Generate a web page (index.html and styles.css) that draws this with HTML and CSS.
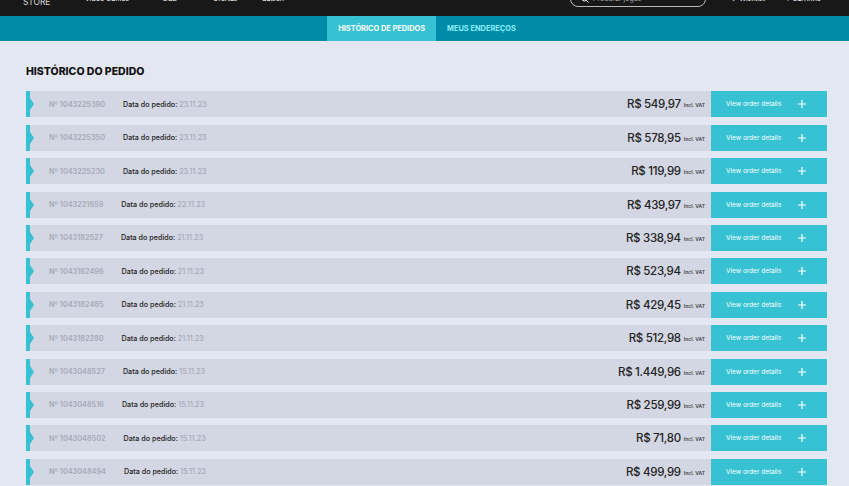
FILE: index.html
```html
<!DOCTYPE html>
<html lang="pt-BR">
<head>
<meta charset="utf-8">
<title>Histórico do pedido</title>
<link rel="stylesheet" href="styles.css">
</head>
<body>
<header class="topbar">
  <div class="brand">STORE</div>
  <nav class="mainnav"><a>Vídeo Games</a><a>D&amp;D</a><a>Ofertas</a><a>Salsch</a></nav>
  <div class="search"><svg width="8" height="8" viewBox="0 0 8 8"><circle cx="3.5" cy="3.5" r="2.5" fill="none" stroke="#fff"/><path d="M5.4 5.4 7.5 7.5" stroke="#fff"/></svg><span>Procurar jogos</span></div>
  <div class="useractions"><a>♥ Wishlist</a><a>▾ Carrinho</a></div>
</header>
<nav class="subnav"><a class="tab active">HISTÓRICO DE PEDIDOS</a><a class="tab">MEUS ENDEREÇOS</a></nav>
<main class="content">
  <h1 class="title">HISTÓRICO DO PEDIDO</h1>
  <div class="orders">
    <div class="order"><span class="flag"></span><span class="num">Nº 1043225390</span><span class="date">Data do pedido: <em>23.11.23</em></span><span class="price">R$ 549,97</span><span class="vat">Incl. VAT</span><a class="details"><span>View order details</span><svg width="8" height="8" viewBox="0 0 8 8"><path d="M4 0v8M0 4h8" stroke="#fff" stroke-width="1.2"/></svg></a></div>
    <div class="order"><span class="flag"></span><span class="num">Nº 1043225350</span><span class="date">Data do pedido: <em>23.11.23</em></span><span class="price">R$ 578,95</span><span class="vat">Incl. VAT</span><a class="details"><span>View order details</span><svg width="8" height="8" viewBox="0 0 8 8"><path d="M4 0v8M0 4h8" stroke="#fff" stroke-width="1.2"/></svg></a></div>
    <div class="order"><span class="flag"></span><span class="num">Nº 1043225230</span><span class="date">Data do pedido: <em>23.11.23</em></span><span class="price">R$ 119,99</span><span class="vat">Incl. VAT</span><a class="details"><span>View order details</span><svg width="8" height="8" viewBox="0 0 8 8"><path d="M4 0v8M0 4h8" stroke="#fff" stroke-width="1.2"/></svg></a></div>
    <div class="order"><span class="flag"></span><span class="num">Nº 1043221659</span><span class="date">Data do pedido: <em>22.11.23</em></span><span class="price">R$ 439,97</span><span class="vat">Incl. VAT</span><a class="details"><span>View order details</span><svg width="8" height="8" viewBox="0 0 8 8"><path d="M4 0v8M0 4h8" stroke="#fff" stroke-width="1.2"/></svg></a></div>
    <div class="order"><span class="flag"></span><span class="num">Nº 1043182527</span><span class="date">Data do pedido: <em>21.11.23</em></span><span class="price">R$ 338,94</span><span class="vat">Incl. VAT</span><a class="details"><span>View order details</span><svg width="8" height="8" viewBox="0 0 8 8"><path d="M4 0v8M0 4h8" stroke="#fff" stroke-width="1.2"/></svg></a></div>
    <div class="order"><span class="flag"></span><span class="num">Nº 1043182496</span><span class="date">Data do pedido: <em>21.11.23</em></span><span class="price">R$ 523,94</span><span class="vat">Incl. VAT</span><a class="details"><span>View order details</span><svg width="8" height="8" viewBox="0 0 8 8"><path d="M4 0v8M0 4h8" stroke="#fff" stroke-width="1.2"/></svg></a></div>
    <div class="order"><span class="flag"></span><span class="num">Nº 1043182485</span><span class="date">Data do pedido: <em>21.11.23</em></span><span class="price">R$ 429,45</span><span class="vat">Incl. VAT</span><a class="details"><span>View order details</span><svg width="8" height="8" viewBox="0 0 8 8"><path d="M4 0v8M0 4h8" stroke="#fff" stroke-width="1.2"/></svg></a></div>
    <div class="order"><span class="flag"></span><span class="num">Nº 1043182280</span><span class="date">Data do pedido: <em>21.11.23</em></span><span class="price">R$ 512,98</span><span class="vat">Incl. VAT</span><a class="details"><span>View order details</span><svg width="8" height="8" viewBox="0 0 8 8"><path d="M4 0v8M0 4h8" stroke="#fff" stroke-width="1.2"/></svg></a></div>
    <div class="order"><span class="flag"></span><span class="num">Nº 1043048527</span><span class="date">Data do pedido: <em>15.11.23</em></span><span class="price">R$ 1.449,96</span><span class="vat">Incl. VAT</span><a class="details"><span>View order details</span><svg width="8" height="8" viewBox="0 0 8 8"><path d="M4 0v8M0 4h8" stroke="#fff" stroke-width="1.2"/></svg></a></div>
    <div class="order"><span class="flag"></span><span class="num">Nº 1043048516</span><span class="date">Data do pedido: <em>15.11.23</em></span><span class="price">R$ 259,99</span><span class="vat">Incl. VAT</span><a class="details"><span>View order details</span><svg width="8" height="8" viewBox="0 0 8 8"><path d="M4 0v8M0 4h8" stroke="#fff" stroke-width="1.2"/></svg></a></div>
    <div class="order"><span class="flag"></span><span class="num">Nº 1043048502</span><span class="date">Data do pedido: <em>15.11.23</em></span><span class="price">R$ 71,80</span><span class="vat">Incl. VAT</span><a class="details"><span>View order details</span><svg width="8" height="8" viewBox="0 0 8 8"><path d="M4 0v8M0 4h8" stroke="#fff" stroke-width="1.2"/></svg></a></div>
    <div class="order"><span class="flag"></span><span class="num">Nº 1043048494</span><span class="date">Data do pedido: <em>15.11.23</em></span><span class="price">R$ 499,99</span><span class="vat">Incl. VAT</span><a class="details"><span>View order details</span><svg width="8" height="8" viewBox="0 0 8 8"><path d="M4 0v8M0 4h8" stroke="#fff" stroke-width="1.2"/></svg></a></div>
  </div>
</main>
</body>
</html>
```
FILE: styles.css
```css
* { box-sizing: border-box; }
html, body { margin: 0; height: 486px; overflow: hidden; }
body { background: #e3e7f1; font-family: "Inter", "Liberation Sans", sans-serif; color: #18181a; }

.topbar { height: 16px; background: #181818; color: #fff; display: flex; align-items: flex-start; overflow: hidden; padding: 0 28px 0 23px; font-size: 7px; line-height: 10px; }
.brand { width: 62px; flex: none; font-size: 8.4px; margin-top: -3px; color: #ddd; }
.mainnav { display: grid; grid-template-columns: 78px 50px 49px auto; margin-top: -6px; }
.search { margin-left: auto; width: 136px; height: 24px; margin-top: -17px; border: 1px solid #b9b9b9; border-radius: 8px; display: flex; align-items: flex-end; gap: 4px; padding: 0 10px 2px; color: #aaa; }
.search svg { margin-bottom: 1px; }
.useractions { display: flex; justify-content: space-between; width: 91px; margin: -6px 0 0 24px; }

.subnav { height: 25px; background: #008ba8; display: flex; justify-content: center; padding-left: 5px; font-size: 7.4px; font-weight: 700; }
.tab { display: flex; align-items: center; padding: 0 11px; color: #8af0f7; }
.tab.active { background: #36c2d2; color: #fff; }

.content { padding: 0 22px 0 26px; }
.title { margin: 24px 0 12.4px; font-size: 10.5px; line-height: 14px; font-weight: 800; color: #111; }
.orders { display: flex; flex-direction: column; gap: 7.4px; }
.order { height: 26px; flex: none; background: #d3d7e3; display: flex; align-items: center; }
.flag { width: 8px; height: 26px; flex: none; position: relative; background: linear-gradient(90deg, #36c2d2 4px, transparent 4px); }
.flag::after { content: ""; position: absolute; left: 4px; top: 7px; border-left: 4px solid #36c2d2; border-top: 6px solid transparent; border-bottom: 6px solid transparent; }
.num { margin-left: 15px; font-size: 7.3px; font-weight: 600; color: #a5a9b8; }
.date { margin-left: 18px; font-size: 7.2px; font-weight: 500; color: #222; }
.date em { font-style: normal; color: #a5a9b8; }
.price { margin-left: auto; font-size: 11.5px; font-weight: 500; letter-spacing: -0.3px; color: #222; }
.vat { margin: 2px 6px 0 3px; font-size: 5px; font-weight: 600; color: #444; }
.details { width: 116px; height: 26px; flex: none; background: #36c2d2; color: #fff; display: flex; align-items: center; justify-content: space-between; padding: 0 21px 0 15px; font-size: 6.5px; }
```
